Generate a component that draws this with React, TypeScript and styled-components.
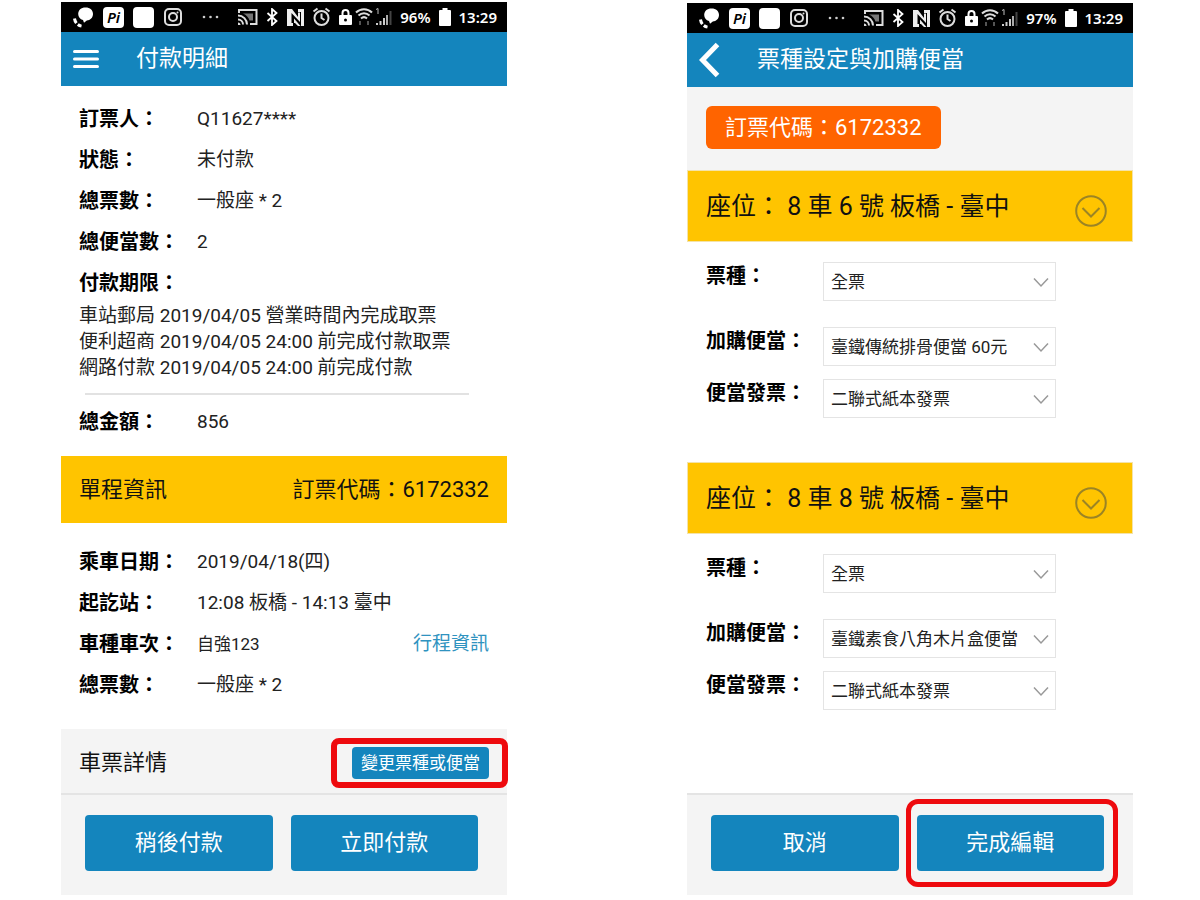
import React from "react";
import styled, { createGlobalStyle } from "styled-components";

const blue = "#1485bd";
const yellow = "#ffc400";
const grey = "#f4f4f4";
const red = "#ee0a0e";

const GlobalStyle = createGlobalStyle`
  * { box-sizing: border-box; }
  body {
    margin: 0;
    background: #fff;
    color: #111;
    font-family: Roboto, "Noto Sans CJK TC", sans-serif;
  }
  button, select { font-family: inherit; }
`;

const Page = styled.main`
  display: grid;
  grid-template-columns: 1fr 1fr;
  column-gap: 180px;
  padding: 2px 67px 5px 61px;
`;

const Phone = styled.section<{ $top?: number }>`
  display: flex;
  flex-direction: column;
  min-width: 0;
  margin-top: ${(p) => p.$top ?? 0}px;
`;

const StatusBar = styled.div`
  display: flex;
  align-items: center;
  justify-content: space-between;
  height: 30px;
  padding: 0 10px 0 12px;
  background: #000;
  color: #fff;
  font-family: "Noto Sans", sans-serif;
  font-size: 15px;
  font-weight: 600;
`;

const StatusGroup = styled.div<{ $gap: number }>`
  display: flex;
  align-items: center;
  gap: ${(p) => p.$gap}px;

  svg { display: block; flex: none; }
`;

const Tile = styled.span`
  display: flex;
  align-items: center;
  justify-content: center;
  width: 21px;
  height: 21px;
  border-radius: 4px;
  background: #fff;
  color: #000;
  font-size: 15px;
  font-style: italic;
  font-weight: 600;
  line-height: 20px;
`;

const TitleBar = styled.header<{ $gap: number }>`
  display: flex;
  align-items: center;
  gap: ${(p) => p.$gap}px;
  height: 54px;
  padding-left: 12px;
  background: ${blue};
  color: #fff;
`;

const IconButton = styled.button`
  display: flex;
  padding: 0;
  border: 0;
  background: none;
  color: inherit;
`;

const Title = styled.h1`
  margin: 0;
  font-size: 23px;
  font-weight: 400;
  line-height: 32px;
`;

const Details = styled.div<{ $top: number; $bottom: number }>`
  padding: ${(p) => p.$top}px 18px ${(p) => p.$bottom}px;
`;

const List = styled.dl`
  margin: 0;
`;

const Row = styled.div`
  display: flex;
  align-items: center;
  min-height: 41px;
`;

const Term = styled.dt`
  flex: none;
  width: 118px;
  color: #000;
  font-size: 20px;
  font-weight: 700;
  line-height: 28px;
  white-space: nowrap;
`;

const Value = styled.dd<{ $small?: boolean }>`
  flex: 1;
  margin: 0;
  color: #222;
  font-size: ${(p) => (p.$small ? 17 : 19)}px;
  line-height: 26px;
`;

const Deadlines = styled.ul`
  margin: 0;
  padding: 0;
  list-style: none;
  color: #222;
  font-size: 19px;
  line-height: 26px;
`;

const Rule = styled.hr`
  height: 2px;
  margin: 12px 20px 6px 6px;
  border: 0;
  background: #e2e2e2;
`;

const InfoLink = styled.a`
  color: #2f93c0;
  font-size: 19px;
  line-height: 26px;
  text-decoration: none;
`;

const TripBand = styled.div`
  display: flex;
  align-items: center;
  justify-content: space-between;
  height: 67px;
  padding: 0 18px;
  background: ${yellow};
  font-size: 22px;
  line-height: 32px;
`;

const BandTitle = styled.h2`
  margin: 0;
  font-size: inherit;
  font-weight: 400;
`;

const TicketStrip = styled.div`
  display: flex;
  align-items: center;
  justify-content: space-between;
  height: 64px;
  padding: 4px 18px 0;
  background: ${grey};
  font-size: 22px;
  line-height: 32px;
`;

const Highlight = styled.div<{ $inset: string; $stroke: number; $radius: number }>`
  position: relative;
  display: grid;

  &::after {
    content: "";
    position: absolute;
    inset: ${(p) => p.$inset};
    border: ${(p) => p.$stroke}px solid ${red};
    border-radius: ${(p) => p.$radius}px;
    pointer-events: none;
  }
`;

const SmallButton = styled.button`
  height: 32px;
  padding: 0 9px;
  border: 0;
  border-radius: 4px;
  background: ${blue};
  color: #fff;
  font-size: 17px;
  line-height: 30px;
`;

const Actions = styled.footer`
  display: grid;
  grid-template-columns: 1fr 1fr;
  gap: 18px;
  padding: 20px 29px 24px 24px;
  border-top: 2px solid #e4e4e4;
  background: ${grey};
`;

const ActionButton = styled.button`
  height: 56px;
  padding: 0;
  border: 0;
  border-radius: 4px;
  background: ${blue};
  color: #fff;
  font-size: 22px;
  line-height: 32px;
`;

const CodeArea = styled.div`
  display: flex;
  padding: 19px 19px 21px;
  background: ${grey};
`;

const CodeBadge = styled.strong`
  padding: 0 19px;
  border-radius: 6px;
  background: #ff6400;
  color: #fff;
  font-size: 22px;
  font-weight: 400;
  line-height: 43px;
`;

const SeatBand = styled.div`
  display: flex;
  align-items: flex-end;
  justify-content: space-between;
  padding: 16px 25px 14px 18px;
  border: 1px solid #f4e3a8;
  background: ${yellow};
`;

const SeatTitle = styled.h2`
  margin: 0;
  font-size: 25px;
  font-weight: 400;
  line-height: 40px;
`;

const Fields = styled.div`
  padding: 20px 77px 44px 19px;
`;

const Field = styled.div<{ $bottom: number }>`
  display: flex;
  align-items: flex-start;
  margin-bottom: ${(p) => p.$bottom}px;
`;

const FieldLabel = styled.label`
  flex: none;
  width: 117px;
  color: #000;
  font-size: 20px;
  font-weight: 700;
  line-height: 28px;
`;

const SelectBox = styled.div`
  position: relative;
  flex: 1;
  min-width: 0;

  svg {
    position: absolute;
    top: 15px;
    right: 7px;
    pointer-events: none;
  }
`;

const Select = styled.select`
  display: block;
  width: 100%;
  height: 39px;
  padding: 0 36px 0 7px;
  border: 1px solid #e4e4e4;
  border-radius: 0;
  appearance: none;
  background: #fff;
  color: #222;
  font-size: 17px;
`;

const Spacer = styled.div`
  flex: 1;
`;

const Status = ({ charge }: { charge: string }) => (
  <StatusBar>
    <StatusGroup $gap={9}>
      <svg width="21" height="22" viewBox="0 0 21 22" fill="none">
        <path d="M12.500 1.500c4.600 0 7.500 2.700 7.500 6.500s-2.800 6.200-6.200 6.500l-2.800 2.200-1-2.600C7 13.200 5.200 11 5.200 8c0-3.800 2.800-6.500 7.300-6.500z" fill="#fff" />
        <path d="M1.500 12.500c.5 4 3 6.800 7 7.600" stroke="#fff" strokeWidth="3" strokeDasharray="5 2 8" />
      </svg>
      <Tile>Pi</Tile>
      <Tile />
      <svg width="20" height="20" viewBox="0 0 20 20" fill="none" stroke="#ddd" strokeWidth="2">
        <rect x="2" y="2" width="16" height="16" rx="4" />
        <circle cx="10" cy="10" r="4" />
        <circle cx="14.500" cy="5.500" r="1" fill="#ddd" stroke="none" />
      </svg>
      <svg width="36" height="20" viewBox="0 0 36 20" fill="#ccc">
        <circle cx="12" cy="10" r="1.300" />
        <circle cx="18.500" cy="10" r="1.300" />
        <circle cx="25" cy="10" r="1.300" />
      </svg>
    </StatusGroup>
    <StatusGroup $gap={8}>
      <StatusGroup $gap={8}>
        <svg width="21" height="18" viewBox="0 0 21 18" fill="none" stroke="#ddd" strokeWidth="2">
          <path d="M2 5V2h17.500v14H13" />
          <path d="M1 7.500a9 9 0 0 1 9 9M1 11.500a5 5 0 0 1 5 5" />
          <path d="M1 14.500a2.500 2.500 0 0 1 2.500 2.500H1z" fill="#ddd" stroke="none" />
          <path d="M6 5.500h10v7h-3.500C11.500 9.500 9.500 7 6 5.500z" fill="#777" stroke="none" />
        </svg>
        <svg width="13" height="18" viewBox="0 0 13 18" fill="none" stroke="#fff" strokeWidth="1.800">
          <path d="M1.500 5l9 8L6 17V1l4.500 4-9 8" />
        </svg>
      </StatusGroup>
      <svg width="17" height="17" viewBox="0 0 17 17" fill="#eee">
        <path d="M0 0h5l6 8V3.500h2V13L4.500 4v10H6v3H0z" />
        <path d="M11 0h6v17h-3.500L7 9.500V14h1l3 3h3V3h-3z" />
      </svg>
      <svg width="19" height="20" viewBox="0 0 19 20" fill="none" stroke="#ddd" strokeWidth="2">
        <circle cx="9.500" cy="11" r="7" />
        <path d="M9.500 6.500V11l3 2M1.500 4.500l4-3M17.500 4.500l-4-3" />
      </svg>
      <StatusGroup $gap={3}>
        <svg width="13" height="18" viewBox="0 0 13 18">
          <path d="M3.500 8V5a3 3 0 0 1 6 0v3" fill="none" stroke="#fff" strokeWidth="2" />
          <rect x="0" y="7" width="13" height="10" rx="1" fill="#fff" />
          <circle cx="6.500" cy="12" r="1.500" fill="#000" />
        </svg>
        <svg width="18" height="20" viewBox="0 0 18 20" fill="none" stroke="#ddd" strokeWidth="2">
          <path d="M1 5.500c4.500-4.500 11.500-4.500 16 0M3.500 8.500c3.200-3 7.800-3 11 0M6 11.500c1.800-1.700 4.200-1.700 6 0" />
          <path d="M5 18v-4M13 14v4" stroke="#555" />
        </svg>
        <svg width="16" height="20" viewBox="0 0 16 20">
          <path d="M0 2.500L2 1.500V7" fill="none" stroke="#bbb" />
          <path d="M1 18v-2M4.500 18v-4M8 18v-7" stroke="#ccc" strokeWidth="2" />
          <path d="M11 18V8" stroke="#aaa" strokeWidth="2" />
          <path d="M14.500 18V4" stroke="#444" strokeWidth="2" />
        </svg>
      </StatusGroup>
      <span>{charge}</span>
      <svg width="12" height="18" viewBox="0 0 12 18" fill="#fff">
        <path d="M3.500 0h5v2H11a1 1 0 0 1 1 1v14a1 1 0 0 1-1 1H1a1 1 0 0 1-1-1V3a1 1 0 0 1 1-1h2.500z" />
      </svg>
      <span>13:29</span>
    </StatusGroup>
  </StatusBar>
);

const Detail = ({
  term,
  children,
  small,
  link,
}: {
  term: string;
  children?: React.ReactNode;
  small?: boolean;
  link?: string;
}) => (
  <Row>
    <Term>{term}</Term>
    <Value $small={small}>
      {children}
    </Value>
    {link && <InfoLink href="#trip">{link}</InfoLink>}
  </Row>
);

const Chooser = ({ id, label, value, bottom = 0 }: { id: string; label: string; value: string; bottom?: number }) => (
  <Field $bottom={bottom}>
    <FieldLabel htmlFor={id}>{label}</FieldLabel>
    <SelectBox>
      <Select id={id} defaultValue={value}>
        <option>{value}</option>
      </Select>
      <svg width="16" height="11" viewBox="0 0 16 11" fill="none" stroke="#999" strokeWidth="1.500">
        <path d="M1 1.500l7 7.500 7-7.500" />
      </svg>
    </SelectBox>
  </Field>
);

const Seat = ({ id, title, meal }: { id: string; title: string; meal: string }) => (
  <section>
    <SeatBand>
      <SeatTitle>{title}</SeatTitle>
      <IconButton type="button" aria-label="展開">
        <svg width="32" height="32" viewBox="0 0 32 32" fill="none" stroke="#9b8425" strokeWidth="2">
          <circle cx="16" cy="16" r="14.800" />
          <path d="M7.500 13l8.500 8.500 8.500-8.500" />
        </svg>
      </IconButton>
    </SeatBand>
    <Fields>
      <Chooser id={`${id}-type`} label="票種：" value="全票" bottom={26} />
      <Chooser id={`${id}-meal`} label="加購便當：" value={meal} bottom={13} />
      <Chooser id={`${id}-receipt`} label="便當發票：" value="二聯式紙本發票" />
    </Fields>
  </section>
);

export default function App() {
  return (
    <>
      <GlobalStyle />
      <Page lang="zh-Hant">
        <Phone>
          <Status charge="96%" />
          <TitleBar $gap={37}>
            <IconButton type="button" aria-label="選單">
              <svg width="26" height="20" viewBox="0 0 26 20" stroke="#fff" strokeWidth="3" strokeLinecap="round">
                <path d="M1.500 2.500h23M1.500 10h23M1.500 17.500h23" />
              </svg>
            </IconButton>
            <Title>付款明細</Title>
          </TitleBar>
          <Details $top={12} $bottom={14}>
            <List>
              <Detail term="訂票人：">Q11627****</Detail>
              <Detail term="狀態：">未付款</Detail>
              <Detail term="總票數：">一般座 * 2</Detail>
              <Detail term="總便當數：">2</Detail>
              <Detail term="付款期限：" />
            </List>
            <Deadlines>
              <li>車站郵局 2019/04/05 營業時間內完成取票</li>
              <li>便利超商 2019/04/05 24:00 前完成付款取票</li>
              <li>網路付款 2019/04/05 24:00 前完成付款</li>
            </Deadlines>
            <Rule />
            <List>
              <Detail term="總金額：">856</Detail>
            </List>
          </Details>
          <TripBand>
            <BandTitle>單程資訊</BandTitle>
            <span>訂票代碼：6172332</span>
          </TripBand>
          <Details $top={18} $bottom={24}>
            <List>
              <Detail term="乘車日期：">2019/04/18(四)</Detail>
              <Detail term="起訖站：">12:08 板橋 - 14:13 臺中</Detail>
              <Detail term="車種車次：" small link="行程資訊">自強123</Detail>
              <Detail term="總票數：">一般座 * 2</Detail>
            </List>
          </Details>
          <TicketStrip>
            <BandTitle>車票詳情</BandTitle>
            <Highlight $inset="-9px -19px -9px -21px" $stroke={6} $radius={8}>
              <SmallButton type="button">變更票種或便當</SmallButton>
            </Highlight>
          </TicketStrip>
          <Actions>
            <ActionButton type="button">稍後付款</ActionButton>
            <ActionButton type="button">立即付款</ActionButton>
          </Actions>
        </Phone>

        <Phone $top={1}>
          <Status charge="97%" />
          <TitleBar $gap={36}>
            <IconButton type="button" aria-label="返回">
              <svg width="22" height="36" viewBox="0 0 22 36" fill="none" stroke="#fff" strokeWidth="5">
                <path d="M18.500 2.500L3.500 18l15 15.500" />
              </svg>
            </IconButton>
            <Title>票種設定與加購便當</Title>
          </TitleBar>
          <CodeArea>
            <CodeBadge>訂票代碼：6172332</CodeBadge>
          </CodeArea>
          <Seat id="seat6" title="座位： 8 車 6 號 板橋 - 臺中" meal="臺鐵傳統排骨便當 60元" />
          <Seat id="seat8" title="座位： 8 車 8 號 板橋 - 臺中" meal="臺鐵素食八角木片盒便當 60元" />
          <Spacer />
          <Actions>
            <ActionButton type="button">取消</ActionButton>
            <Highlight $inset="-16px -14px -16px -11px" $stroke={5} $radius={12}>
              <ActionButton type="button">完成編輯</ActionButton>
            </Highlight>
          </Actions>
        </Phone>
      </Page>
    </>
  );
}
